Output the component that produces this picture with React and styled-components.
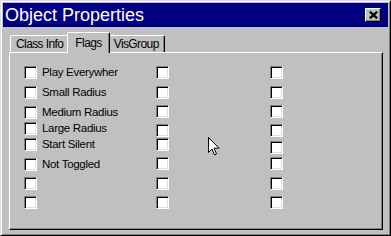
import React from 'react';
import styled, { createGlobalStyle } from 'styled-components';

const GlobalStyle = createGlobalStyle`
  html, body {
    margin: 0;
    padding: 0;
    background: #c0c0c0;
  }
  * { box-sizing: border-box; }
`

const Window = styled.div`
    position: relative;
    width: 391px;
    height: 236px;
    background: #c0c0c0;
    border: 1px solid;
    border-color: #dfdfdf #000 #000 #dfdfdf;
    box-shadow: inset 1px 1px #fff, inset -1px -1px #808080;
    padding: 2px;
    display: flex;
    flex-direction: column;
    font-family: 'Liberation Sans', Arial, sans-serif;
`

const TitleBar = styled.div`
    height: 24px;
    background: #000080;
    display: flex;
    align-items: center;
    justify-content: space-between;
    padding: 0 7px 0 2px;

    h1 {
        margin: 0;
        font-size: 18px;
        font-weight: normal;
        color: white;
        line-height: 24px;
    }
`

const CloseButton = styled.button`
    width: 16px;
    height: 14px;
    padding: 0;
    background: #c0c0c0;
    border: 1px solid;
    border-color: #fff #000 #000 #fff;
    box-shadow: inset -1px -1px #808080;
    display: flex;
    align-items: center;
    justify-content: center;
`

const Body = styled.div`
    flex: 1;
    display: flex;
    flex-direction: column;
    padding: 6px 5px 3px 6px;
`

const TabRow = styled.div`
    display: flex;
    align-items: flex-end;
    height: 19px;
    padding-left: 1px;
    position: relative;
    z-index: 1;
`

const Tab = styled.div`
    height: ${p => p.$active ? '21px' : '17px'};
    margin: ${p => p.$active ? '0 -2px -1px -2px' : '0'};
    padding: ${p => p.$active ? '3px 7px 0' : '1px 5px 0'};
    background: #c0c0c0;
    border: 1px solid;
    border-bottom: none;
    border-color: #fff #000 transparent #fff;
    border-radius: 2px 2px 0 0;
    box-shadow: inset -1px 0 #808080;
    font-size: 12px;
    letter-spacing: -0.6px;
    color: #000;
    white-space: nowrap;
    position: relative;
    z-index: ${p => p.$active ? 2 : 1};
`

const Panel = styled.div`
    position: relative;
    flex: 1;
    border: 1px solid;
    border-color: #fff #000 #000 #fff;
    box-shadow: inset -1px -1px #808080;
    display: grid;
    grid-template-columns: 132px 114px auto;
    padding: 13px 0 0 14px;
    align-items: start;
`

const Column = styled.div`
    display: flex;
    flex-direction: column;
`

const Row = styled.label`
    display: flex;
    align-items: center;
    height: 13px;
    margin-top: ${p => p.$gap}px;
`

const Box = styled.span`
    width: 13px;
    height: 13px;
    flex: none;
    background: #fff;
    border: 1px solid;
    border-color: #808080 #fff #fff #808080;
    box-shadow: inset 1px 1px #000, inset -1px -1px #dfdfdf;
`

const Text = styled.span`
    margin-left: 5px;
    width: 76px;
    overflow: hidden;
    white-space: nowrap;
    font-size: 11.5px;
    letter-spacing: -0.3px;
    color: #000;
    line-height: 13px;
`

const Cursor = styled.svg`
    position: absolute;
    left: 207px;
    top: 136px;
    z-index: 5;
`

const labels = ['Play Everywhen', 'Small Radius', 'Medium Radius', 'Large Radius', 'Start Silent', 'Not Toggled', '', ''];

const columns = [
    [66, 86, 106, 122, 138, 158, 177, 196],
    [66, 86, 105, 124, 138, 157, 177, 196],
    [66, 86, 105, 124, 141, 157, 177, 196],
];

const App = () => {
    return (
        <>
        <GlobalStyle />
        <Window>
          <TitleBar>
            <h1>Object Properties</h1>
            <CloseButton>
              <svg width="9" height="8" viewBox="0 0 9 8">
                <path d="M0.8 0.6 L8.2 7.4 M8.2 0.6 L0.8 7.4" stroke="#000" strokeWidth="2.2" />
              </svg>
            </CloseButton>
          </TitleBar>
          <Body>
            <TabRow>
              <Tab>Class Info</Tab>
              <Tab $active>Flags</Tab>
              <Tab>VisGroup</Tab>
            </TabRow>
            <Panel>
              {columns.map((tops, c) => (
                <Column key={c}>
                  {tops.map((top, i) => (
                    <Row key={i} $gap={i === 0 ? 0 : top - tops[i - 1] - 13}>
                      <Box />
                      {c === 0 && labels[i] && <Text>{labels[i]}</Text>}
                    </Row>
                  ))}
                </Column>
              ))}
            </Panel>
          </Body>
          <Cursor width="12" height="19" viewBox="0 0 12 19">
            <path d="M0.5 0.5 L0.5 15.5 L4 12 L6.5 18 L8.5 17 L6 11.2 L11 11.2 Z" fill="#fff" stroke="#000" strokeWidth="1" />
          </Cursor>
        </Window>
        </>
    )
}

export default App;
